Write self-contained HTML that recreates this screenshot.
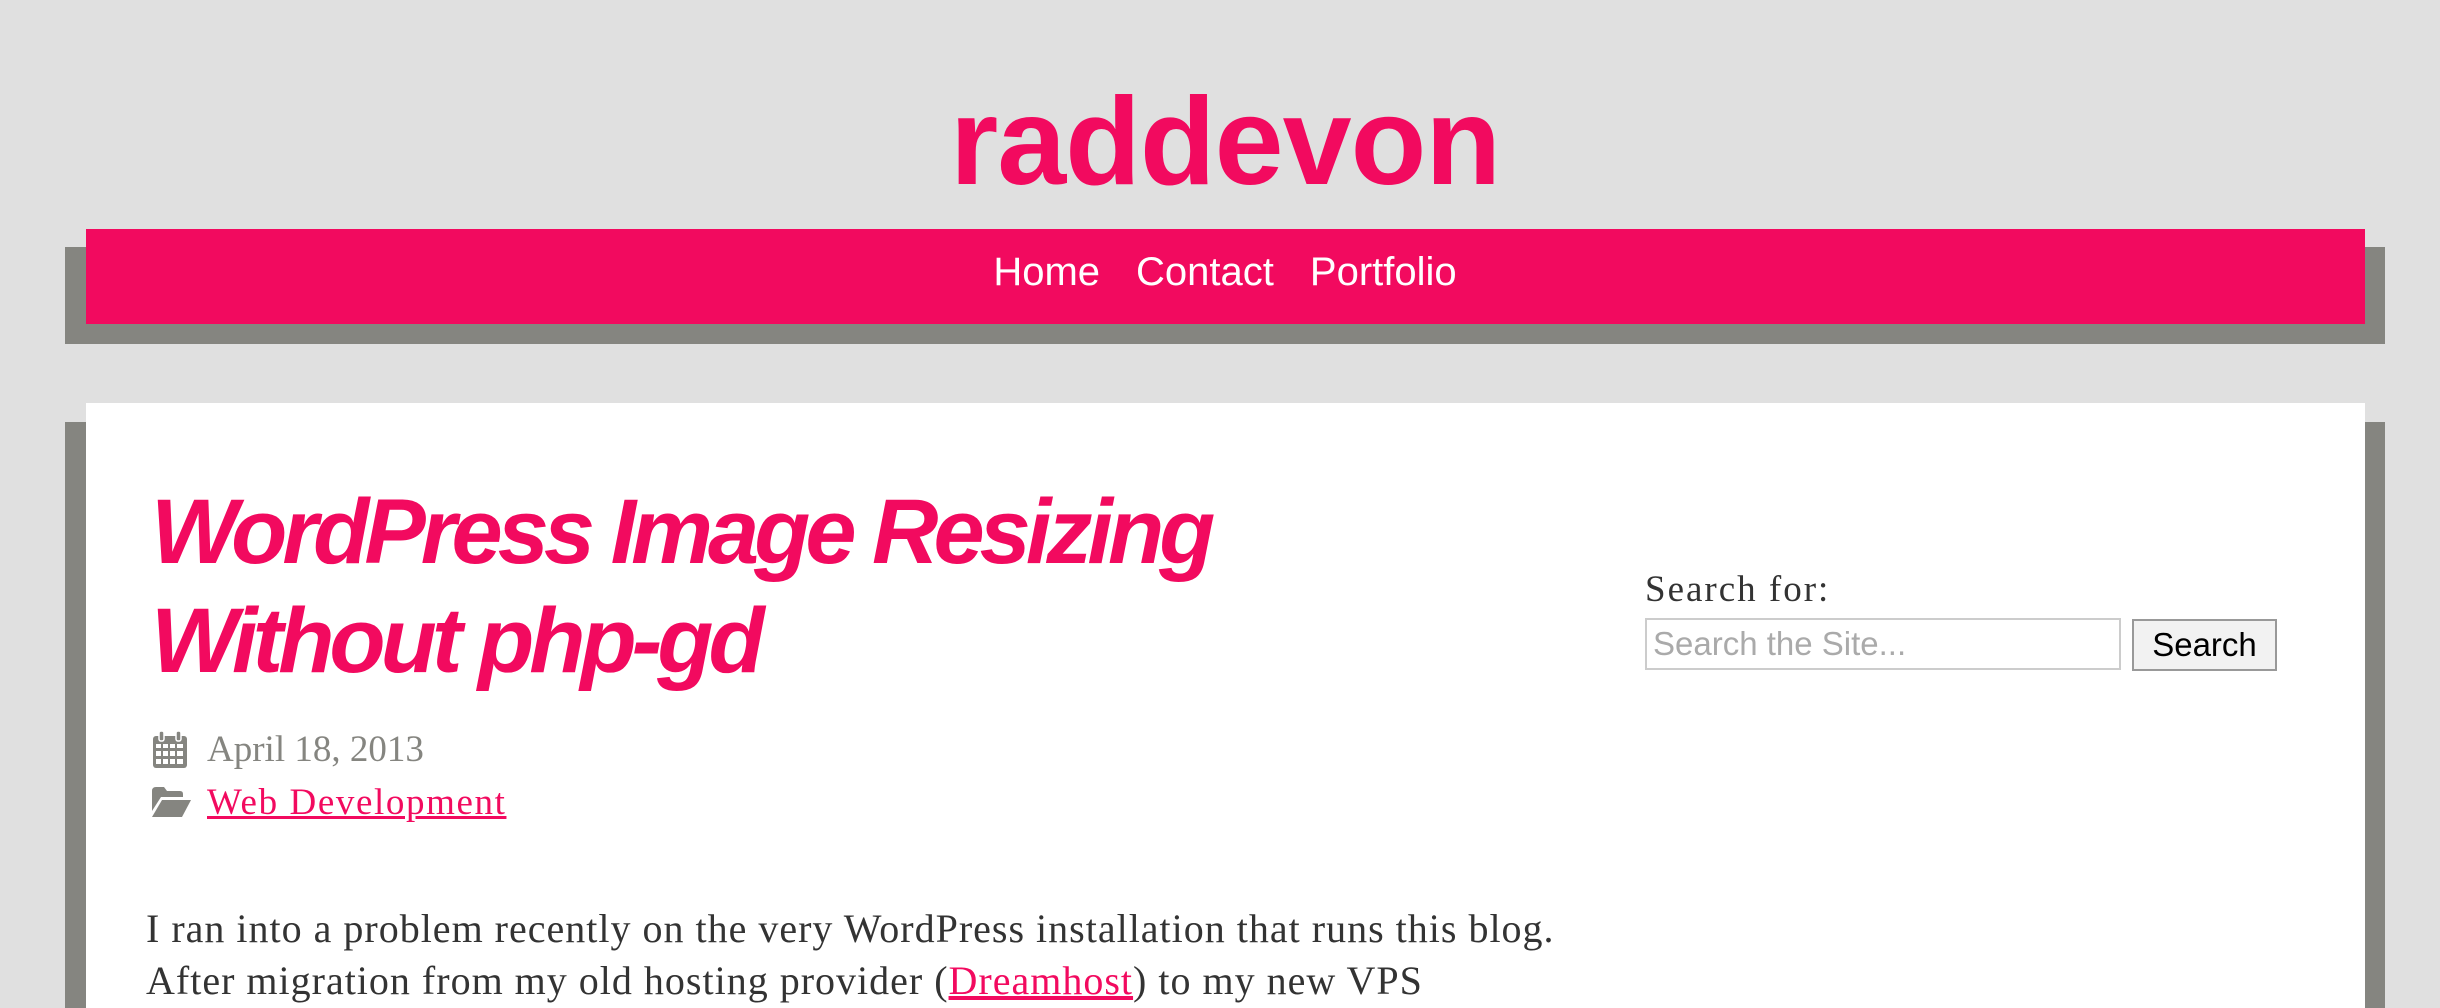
<!DOCTYPE html>
<html style="overflow:hidden;height:1008px"><head><meta charset="utf-8"><style>
html,body{margin:0;padding:0;}
body{width:2440px;height:1008px;overflow:hidden;background:#e0e0e0;font-family:"Liberation Serif",serif;}
#w{position:relative;width:2440px;height:1008px;overflow:hidden;}
.a{position:absolute;}
.logo{left:0;width:2450px;text-align:center;top:80px;font:bold 124px/1 "Liberation Sans",sans-serif;color:#f20a5f;letter-spacing:-1px;}
.navsh{left:65px;top:247px;width:2320px;height:97px;background:#858580;}
.nav{left:86px;top:229px;width:2279px;height:95px;background:#f20a5f;}
.navt{left:0;width:2450px;text-align:center;top:252px;font:40px/1 "Liberation Sans",sans-serif;color:#fff;}
.navt span{margin:0 18px;}
.csh{left:65px;top:422px;width:2320px;height:600px;background:#858580;}
.c{left:86px;top:403px;width:2279px;height:620px;background:#fff;}
h1{position:absolute;margin:0;left:151px;top:478px;font:italic bold 92px/109px "Liberation Sans",sans-serif;letter-spacing:-5px;color:#f20a5f;}
.meta{left:207px;font-size:37px;color:#858580;}
.meta a{color:#f20a5f;letter-spacing:1.6px;}
p{position:absolute;margin:0;left:146px;top:903px;font-size:40px;line-height:52px;color:#333;width:1700px;letter-spacing:1px;}
p a{color:#f20a5f;}
.sf{left:1645px;top:568px;font-size:37px;color:#333;letter-spacing:2px;}
.inp{left:1645px;top:618px;height:48px;border:2px solid #ccc;background:#fff;font:33px/48px "Liberation Sans",sans-serif;color:#aaa;padding-left:6px;width:466px;}
.btn{left:2132px;top:619px;width:141px;height:48px;border:2px solid #999;background:#f2f2f2;font:33px/48px "Liberation Sans",sans-serif;color:#000;text-align:center;}
</style></head><body><div id="w">
<div class="a logo">raddevon</div>
<div class="a navsh"></div>
<div class="a nav"></div>
<div class="a navt"><span>Home</span><span>Contact</span><span>Portfolio</span></div>
<div class="a csh"></div>
<div class="a c"></div>
<h1>WordPress Image Resizing<br>Without php-gd</h1>
<svg class="a" style="left:152px;top:731px" width="36" height="38" viewBox="0 0 36 38"><rect x="1" y="5" width="34" height="32" rx="3" fill="#858580"/><rect x="7" y="0" width="5" height="10" rx="2" fill="#858580" stroke="#fff" stroke-width="1.5"/><rect x="24" y="0" width="5" height="10" rx="2" fill="#858580" stroke="#fff" stroke-width="1.5"/><g fill="#fff"><rect x="4" y="13" width="5" height="4"/><rect x="11" y="13" width="5" height="4"/><rect x="18" y="13" width="5" height="4"/><rect x="25" y="13" width="6" height="4"/><rect x="4" y="20" width="5" height="5"/><rect x="11" y="20" width="5" height="5"/><rect x="18" y="20" width="5" height="5"/><rect x="25" y="20" width="6" height="5"/><rect x="4" y="28" width="5" height="5"/><rect x="11" y="28" width="5" height="5"/><rect x="18" y="28" width="5" height="5"/><rect x="25" y="28" width="6" height="5"/></g></svg>
<div class="a meta" style="top:728px">April 18, 2013</div>
<svg class="a" style="left:152px;top:787px" width="40" height="30" viewBox="0 0 40 30"><path d="M0 4 Q0 0 4 0 H12 L15 4 H28 Q31 4 31 7 V10 H9 L0 24 Z" fill="#858580"/><path d="M10 13 H39 L30 30 H0 Z" fill="#858580"/></svg>
<div class="a meta" style="top:781px"><a href="#">Web Development</a></div>
<p>I ran into a problem recently on the very WordPress installation that runs this blog.<br>After migration from my old hosting provider (<a href="#">Dreamhost</a>) to my new VPS</p>
<div class="a sf">Search for:</div>
<div class="a inp">Search the Site...</div>
<div class="a btn">Search</div>
</div></body></html>
